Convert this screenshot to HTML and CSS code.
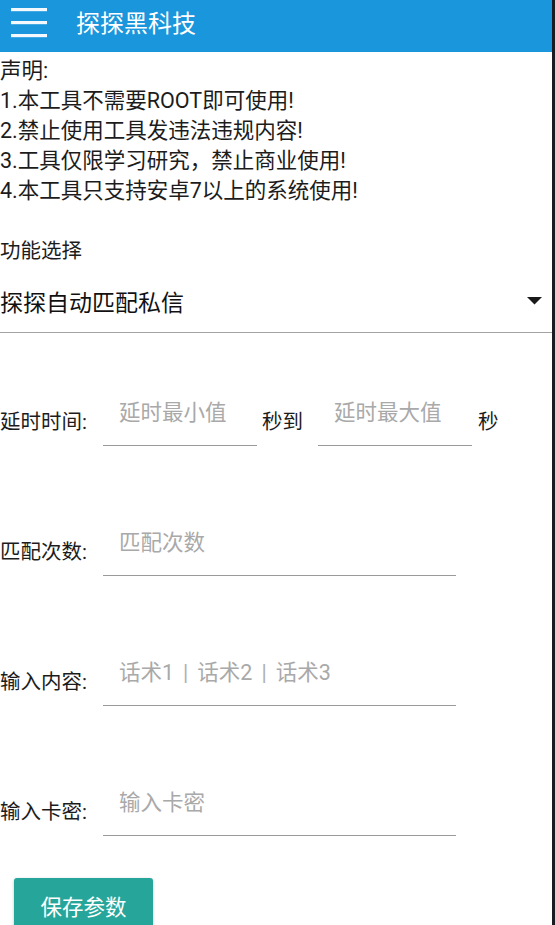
FILE: index.html
```html
<!DOCTYPE html>
<html lang="zh-CN">
<head>
<meta charset="utf-8">
<title>探探黑科技</title>
<link rel="stylesheet" href="styles.css">
</head>
<body>
<div class="app">
  <header class="appbar">
    <svg class="menu" width="36" height="30" viewBox="0 0 36 30" aria-hidden="true">
      <rect x="0" y="0" width="36" height="3.2" fill="#f4f9fd"/>
      <rect x="0" y="13" width="36" height="3.2" fill="#f4f9fd"/>
      <rect x="0" y="26" width="36" height="3.2" fill="#f4f9fd"/>
    </svg>
    <h1 class="title">探探黑科技</h1>
  </header>

  <main class="content">
    <div class="notice">
      <p>声明:</p>
      <p>1.本工具不需要ROOT即可使用!</p>
      <p>2.禁止使用工具发违法违规内容!</p>
      <p>3.工具仅限学习研究，禁止商业使用!</p>
      <p>4.本工具只支持安卓7以上的系统使用!</p>
    </div>

    <div class="section-label">功能选择</div>
    <div class="spinner">
      <span class="spinner-text">探探自动匹配私信</span>
      <svg class="caret" width="15" height="8" viewBox="0 0 15 8" aria-hidden="true">
        <path d="M0 0 L15 0 L7.5 7.5 Z" fill="#1a1a1a"/>
      </svg>
    </div>

    <div class="form">
      <div class="row">
        <span class="label">延时时间:</span>
        <div class="input short"><span class="ph">延时最小值</span></div>
        <span class="unit unit-mid">秒到</span>
        <div class="input short"><span class="ph">延时最大值</span></div>
        <span class="unit unit-end">秒</span>
      </div>
      <div class="row">
        <span class="label">匹配次数:</span>
        <div class="input long"><span class="ph">匹配次数</span></div>
      </div>
      <div class="row">
        <span class="label">输入内容:</span>
        <div class="input long"><span class="ph">话术1<span class="sep">|</span>话术2<span class="sep">|</span>话术3</span></div>
      </div>
      <div class="row">
        <span class="label">输入卡密:</span>
        <div class="input long"><span class="ph">输入卡密</span></div>
      </div>
    </div>

    <button class="save" type="button">保存参数</button>
  </main>
</div>
</body>
</html>
```

FILE: styles.css
```css
html, body {
  margin: 0;
  padding: 0;
  background: #ffffff;
  overflow: hidden;
}

body {
  font-family: "Roboto", "Noto Sans CJK SC", sans-serif;
  color: #1c1c1c;
}

.app {
  width: 552px;
  height: 925px;
  border-right: 3px solid #1b1b22;
  overflow: hidden;
  background: #ffffff;
}

.appbar {
  height: 52px;
  background: #1a96dc;
  display: flex;
  align-items: center;
  padding-left: 11px;
  box-sizing: border-box;
}

.menu {
  display: block;
  flex: none;
  margin-top: -6px;
}

.title {
  margin: 0 0 0 29px;
  font-size: 24px;
  font-weight: 400;
  color: #ffffff;
  line-height: 30px;
  margin-top: -5px;
}

.content {
  padding: 4px 0 0 0;
}

.notice p {
  margin: 0;
  font-size: 21.5px;
  line-height: 30px;
  color: #1c1c1c;
}

.section-label {
  margin-top: 30px;
  font-size: 20.5px;
  line-height: 30px;
  color: #1c1c1c;
}

.spinner {
  height: 67px;
  box-sizing: border-box;
  padding: 3px 10px 0 0;
  display: flex;
  align-items: center;
  justify-content: space-between;
  border-bottom: 1px solid #a3a3a3;
}

.spinner-text {
  font-size: 23px;
  color: #111111;
}

.caret {
  display: block;
}

.form {
  margin-top: 24px;
}

.row {
  height: 130px;
  display: flex;
  align-items: center;
}

.label {
  width: 88px;
  flex: none;
  font-size: 20.5px;
  line-height: 30px;
  color: #1c1c1c;
  white-space: nowrap;
}

.input {
  margin-left: 15px;
  height: 47px;
  box-sizing: border-box;
  border-bottom: 1.5px solid #9a9a9a;
  padding-left: 16px;
  flex: none;
}

.input.short {
  width: 154px;
}

.input.long {
  width: 353px;
}

.ph {
  font-size: 21.5px;
  line-height: 28px;
  color: #a9a9a9;
  white-space: nowrap;
}

.sep {
  margin: 0 9px;
  color: #b0b0b0;
}

.unit {
  font-size: 20.5px;
  line-height: 30px;
  color: #1c1c1c;
  white-space: nowrap;
}

.unit-mid {
  margin: 0 15px 0 5px;
}

.row .unit-mid + .input {
  margin-left: 0;
}

.unit-end {
  margin-left: 6px;
}

.save {
  margin: 1px 0 0 14px;
  width: 139px;
  height: 54px;
  border: none;
  border-radius: 3px;
  background: #26a69a;
  color: #ffffff;
  font-family: "Roboto", "Noto Sans CJK SC", sans-serif;
  font-size: 21.5px;
  padding: 0;
  box-shadow: 0 1px 3px rgba(0, 0, 0, 0.25);
}
```
